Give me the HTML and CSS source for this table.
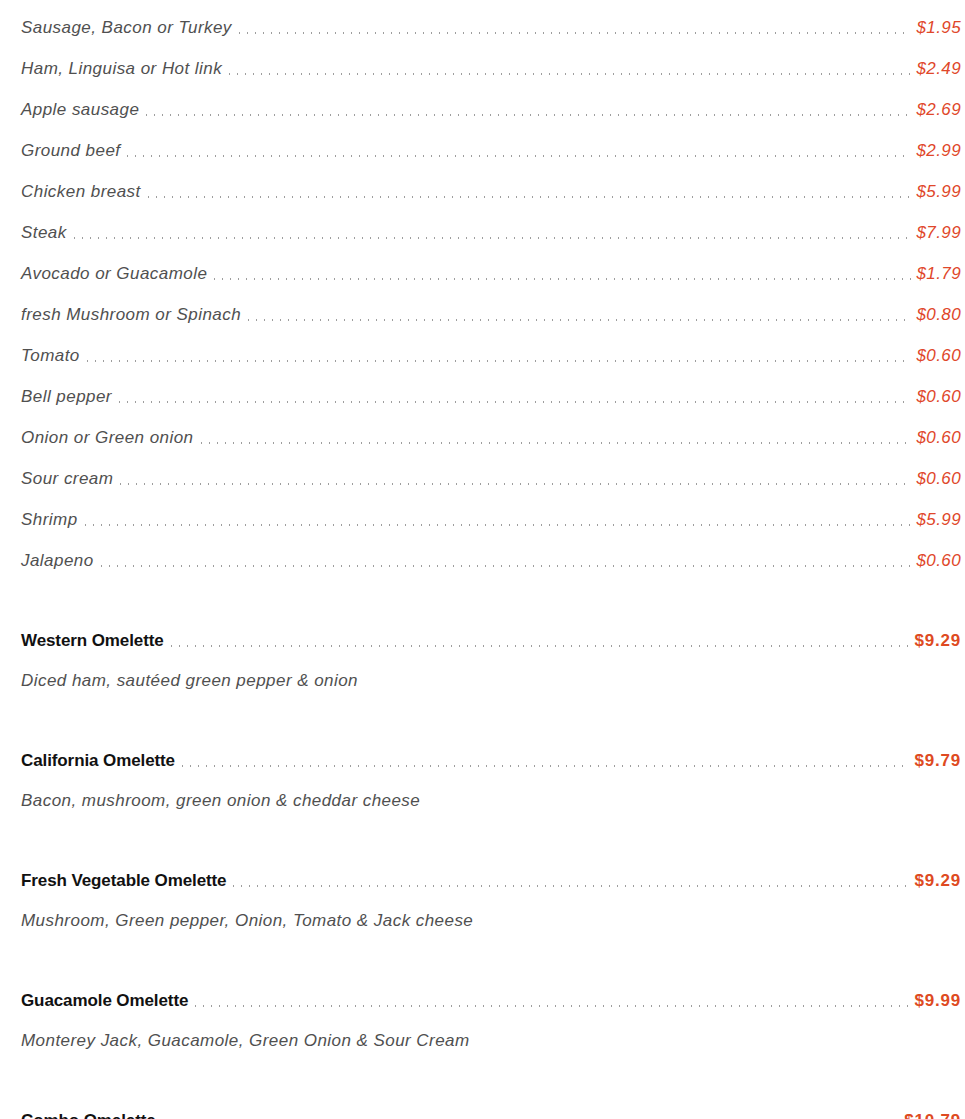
FILE: index.html
```html
<!DOCTYPE html>
<html lang="en">
<head>
<meta charset="utf-8">
<title>Menu</title>
<link rel="stylesheet" href="styles.css">
</head>
<body>
<div class="menu">
  <div class="extras">
    <div class="row"><span class="name">Sausage, Bacon or Turkey</span><span class="leader"></span><span class="price">$1.95</span></div>
    <div class="row"><span class="name">Ham, Linguisa or Hot link</span><span class="leader"></span><span class="price">$2.49</span></div>
    <div class="row"><span class="name">Apple sausage</span><span class="leader"></span><span class="price">$2.69</span></div>
    <div class="row"><span class="name">Ground beef</span><span class="leader"></span><span class="price">$2.99</span></div>
    <div class="row"><span class="name">Chicken breast</span><span class="leader"></span><span class="price">$5.99</span></div>
    <div class="row"><span class="name">Steak</span><span class="leader"></span><span class="price">$7.99</span></div>
    <div class="row"><span class="name">Avocado or Guacamole</span><span class="leader"></span><span class="price">$1.79</span></div>
    <div class="row"><span class="name">fresh Mushroom or Spinach</span><span class="leader"></span><span class="price">$0.80</span></div>
    <div class="row"><span class="name">Tomato</span><span class="leader"></span><span class="price">$0.60</span></div>
    <div class="row"><span class="name">Bell pepper</span><span class="leader"></span><span class="price">$0.60</span></div>
    <div class="row"><span class="name">Onion or Green onion</span><span class="leader"></span><span class="price">$0.60</span></div>
    <div class="row"><span class="name">Sour cream</span><span class="leader"></span><span class="price">$0.60</span></div>
    <div class="row"><span class="name">Shrimp</span><span class="leader"></span><span class="price">$5.99</span></div>
    <div class="row"><span class="name">Jalapeno</span><span class="leader"></span><span class="price">$0.60</span></div>
  </div>

  <div class="dish">
    <div class="row title-row"><span class="title">Western Omelette</span><span class="leader"></span><span class="dish-price">$9.29</span></div>
    <p class="desc">Diced ham, sautéed green pepper &amp; onion</p>
  </div>
  <div class="dish">
    <div class="row title-row"><span class="title">California Omelette</span><span class="leader"></span><span class="dish-price">$9.79</span></div>
    <p class="desc">Bacon, mushroom, green onion &amp; cheddar cheese</p>
  </div>
  <div class="dish">
    <div class="row title-row"><span class="title">Fresh Vegetable Omelette</span><span class="leader"></span><span class="dish-price">$9.29</span></div>
    <p class="desc">Mushroom, Green pepper, Onion, Tomato &amp; Jack cheese</p>
  </div>
  <div class="dish">
    <div class="row title-row"><span class="title">Guacamole Omelette</span><span class="leader"></span><span class="dish-price">$9.99</span></div>
    <p class="desc">Monterey Jack, Guacamole, Green Onion &amp; Sour Cream</p>
  </div>
  <div class="dish">
    <div class="row title-row"><span class="title">Combo Omelette</span><span class="leader"></span><span class="dish-price">$10.79</span></div>
    <p class="desc">Ham, bacon, sausage, mushroom &amp; cheese</p>
  </div>
</div>
</body>
</html>
```

FILE: styles.css
```css
html, body {
  margin: 0;
  padding: 0;
  background: #ffffff;
}

body {
  font-family: "Liberation Sans", Arial, Helvetica, sans-serif;
  font-size: 17px;
}

.menu {
  padding: 7px 4px 0 21px;
}

.row {
  display: flex;
  align-items: baseline;
  height: 41px;
  line-height: 41px;
}

.name {
  font-style: italic;
  color: #505050;
  letter-spacing: 0.45px;
  white-space: nowrap;
}

.price {
  font-style: italic;
  color: #e0472a;
  letter-spacing: 0.4px;
  white-space: nowrap;
}

.leader {
  flex: 1;
  height: 2px;
  margin: 0 5px 0 5px;
  background-image: linear-gradient(to right, #9e9e9e 0 1.5px, transparent 1.5px);
  background-size: 8px 1.5px;
  background-repeat: repeat-x;
  background-position: 2px 0;
  position: relative;
  top: 1px;
}

.dish {
  margin-top: 39px;
}

.title {
  font-weight: bold;
  color: #111111;
  letter-spacing: -0.1px;
  white-space: nowrap;
}

.dish-price {
  font-weight: bold;
  color: #de4a22;
  letter-spacing: 0.8px;
  white-space: nowrap;
}

.desc {
  margin: 0;
  height: 40px;
  line-height: 40px;
  font-style: italic;
  color: #505050;
  letter-spacing: 0.45px;
}
```
